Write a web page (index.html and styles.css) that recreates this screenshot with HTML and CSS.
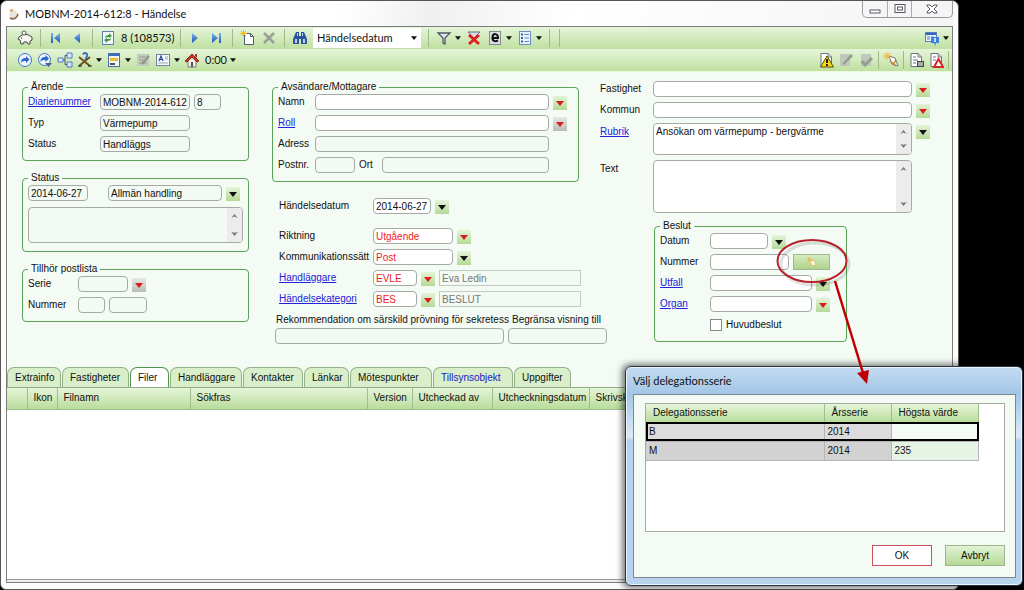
FILE: index.html
```html
<!DOCTYPE html>
<html lang="sv">
<head>
<meta charset="utf-8">
<title>MOBNM-2014-612:8 - Händelse</title>
<link rel="stylesheet" href="styles.css">
</head>
<body>
<svg class="defs" aria-hidden="true">
  <defs>
    <linearGradient id="blue" x1="0" y1="0" x2="0" y2="1"><stop offset="0" stop-color="#7db4ee"/><stop offset="1" stop-color="#1f57b8"/></linearGradient>
    <symbol id="down" viewBox="0 0 8 5"><path d="M0 0h8L4 5z" fill="currentColor"/></symbol>
    <symbol id="chev-up" viewBox="0 0 8 5"><path d="M0 5l4-5 4 5-4-2z" fill="#777"/></symbol>
    <symbol id="chev-down" viewBox="0 0 8 5"><path d="M0 0l4 5 4-5-4 1z" fill="#777"/></symbol>
    <symbol id="doc" viewBox="0 0 16 16"><path d="M3 1.5h7l3.500 3.500v9.500H3z" fill="#fff" stroke="#6c7480"/><path d="M10 1.500V5h3.500" fill="none" stroke="#6c7480"/></symbol>
  </defs>
</svg>
<div class="desktop">
  <main class="window">
    <header class="titlebar">
      <svg class="icon" viewBox="0 0 16 16"><path d="M3 7l6-3 4 4-3 5-6 1z" fill="#e9e4de"/><path d="M4 12c4 2 7 0 8-4" fill="none" stroke="#8a6450" stroke-width="1.500"/><path d="M4 5l3-1" stroke="#d79a5a" stroke-width="2"/></svg>
      <h1>MOBNM-2014-612:8 - Händelse</h1>
      <div class="caption-buttons">
        <button type="button" aria-label="Minimera"><svg viewBox="0 0 14 12"><rect x="2" y="7" width="10" height="3" fill="#fff" stroke="#545866"/></svg></button>
        <button type="button" aria-label="Maximera"><svg viewBox="0 0 14 12"><rect x="2" y="1.500" width="10" height="8" fill="#fff" stroke="#545866"/><rect x="4.500" y="4" width="5" height="3" fill="#fff" stroke="#545866"/></svg></button>
        <button type="button" class="close" aria-label="Stäng"><svg viewBox="0 0 14 12"><path d="M2 2h3l2 2 2-2h3v1L9 6l3 3v1H9L7 8l-2 2H2V9l3-3-3-3z" fill="#fff" stroke="#545866"/></svg></button>
      </div>
    </header>
    <div class="client">
      <div class="toolbar wide" role="toolbar" aria-label="Navigering">
        <button type="button" aria-label="Spargris"><svg class="icon" viewBox="0 0 16 16"><path d="M2 7l3-2c2-1 6-1 8 1l2 1v3l-2 1v3h-2l-1-2H7l-1 2H4l-1-4-2-1z" fill="#f4f8ec" stroke="#444"/><circle cx="7" cy="3" r="2" fill="#fff" stroke="#555"/><path d="M4 8h1" stroke="#222"/></svg></button>
        <span class="sep"></span>
        <button type="button" aria-label="Första"><svg class="icon" viewBox="0 0 16 16"><path d="M3 3h2v10H3zM12 3v10L6 8z" fill="url(#blue)"/></svg></button>
        <button type="button" aria-label="Föregående"><svg class="icon" viewBox="0 0 16 16"><path d="M11 3v10L5 8z" fill="url(#blue)"/></svg></button>
        <span class="sep"></span>
        <button type="button" aria-label="Uppdatera"><svg class="icon" viewBox="0 0 16 16"><rect x="2.500" y="1.500" width="11" height="13" fill="#f2f7fd" stroke="#5f7fae"/><path d="M5 8c0-3 3-3 4-3V3l3 3-3 2V7c-2 0-3 0-4 1zM11 8c0 3-3 3-4 3v2l-3-3 3-2v1c2 0 3 0 4-1z" fill="#3f9b3a"/></svg></button>
        <span class="count">8 (108573)</span>
        <span class="sep"></span>
        <button type="button" aria-label="Nästa"><svg class="icon" viewBox="0 0 16 16"><path d="M4 3v10l6-5z" fill="url(#blue)"/></svg></button>
        <button type="button" aria-label="Sista"><svg class="icon" viewBox="0 0 16 16"><path d="M3 3v10l6-5zM10 3h2v10h-2z" fill="url(#blue)"/></svg></button>
        <span class="sep"></span>
        <button type="button" aria-label="Ny"><svg class="icon" viewBox="0 0 16 16"><path d="M4.500 3.500h6l3 3v8h-9z" fill="#fff" stroke="#4e5b72"/><path d="M10.500 3.500v3h3" fill="none" stroke="#4e5b72"/><path d="M3.500 0v7M0 3.500h7M1 1l5 5M6 1L1 6" stroke="#f0b92c"/></svg></button>
        <button type="button" aria-label="Ta bort"><svg class="icon" viewBox="0 0 16 16"><path d="M3 3l10 10M13 3L3 13" stroke="#9b9f98" stroke-width="2.500"/></svg></button>
        <span class="sep"></span>
        <button type="button" aria-label="Sök"><svg class="icon" viewBox="0 0 16 16"><path d="M4 2h3v4h2V2h3l3 7v5H9V9H7v5H1V9z" fill="#2c549c"/><path d="M3 9h2v4H3zM11 9h2v4h-2zM5 3h1v3H5zM10 3h1v3h-1z" fill="#b6d0f4"/></svg></button>
        <label class="combo"><select aria-label="Sökfält"><option>Händelsedatum</option></select><svg class="caret"><use href="#down"/></svg></label>
        <span class="sep"></span>
        <button type="button" class="drop" aria-label="Filter"><svg class="icon" viewBox="0 0 16 16"><path d="M2 3h12l-5 5v6l-2-1V8z" fill="#dfe6ee" stroke="#4f5863" stroke-width="1.300"/></svg><svg class="caret"><use href="#down"/></svg></button>
        <button type="button" aria-label="Rensa filter"><svg class="icon" viewBox="0 0 16 16"><path d="M2 2h12l-5 5v4H7V7z" fill="#d5dce4" stroke="#68717c"/><path d="M3 5l10 9M13 5L3 14" stroke="#e0201c" stroke-width="3"/></svg></button>
        <button type="button" class="drop" aria-label="Export"><svg class="icon" viewBox="0 0 16 16"><rect x="2.500" y="1.500" width="11" height="13" fill="#dcdfe2" stroke="#858a90"/><path d="M5 8h6c0-5-5-5-5.500-1S8 12 11 10.500" fill="none" stroke="#111" stroke-width="2"/></svg><svg class="caret"><use href="#down"/></svg></button>
        <button type="button" class="drop" aria-label="Lista"><svg class="icon" viewBox="0 0 16 16"><rect x="2.500" y="1.500" width="11" height="13" fill="#e9f2fd" stroke="#6d8fc4"/><path d="M4 4.500h2M4 8h2M4 11.500h2" stroke="#2a62b8" stroke-width="2"/><path d="M7.500 4.500H12M7.500 8H12M7.500 11.500H12" stroke="#6689bd"/></svg><svg class="caret"><use href="#down"/></svg></button>
        <span class="sep"></span><span class="sep"></span>
        <span class="spring"></span>
        <button type="button" class="drop" aria-label="Information"><svg class="icon" viewBox="0 0 16 16"><rect x="1.500" y="2.500" width="11" height="9" fill="#eaf2fc" stroke="#5a7fbf"/><path d="M2 4h10" stroke="#3465ba" stroke-width="2"/><path d="M3 7h3M3 9h3M7 7h3" stroke="#5a7fbf"/><path d="M7 7h8v6h-3l-1 3-1-3H7z" fill="#3b7fe0"/><path d="M11 8v4" stroke="#fff" stroke-width="1.500"/></svg><svg class="caret"><use href="#down"/></svg></button>
      </div>
      <div class="toolbar" role="toolbar" aria-label="Åtgärder">
        <button type="button" aria-label="Gå till"><svg class="icon" viewBox="0 0 16 16"><circle cx="8" cy="8" r="6.500" fill="#eef5ff" stroke="#3d75cf"/><path d="M4 11c0-4 2-5 5-5V4l3.500 3.500L9 11V9C7 9 5 9 4 11z" fill="#2e67c6"/></svg></button>
        <button type="button" aria-label="Gå vidare"><svg class="icon" viewBox="0 0 16 16"><circle cx="7.500" cy="7.500" r="6" fill="#eef5ff" stroke="#3d75cf"/><path d="M3.500 10c0-4 2-5 5-5V3L12 6.500 8.500 10V8C6 8 5 8 3.500 10z" fill="#2e67c6"/><path d="M8 11h7l-3.500 4z" fill="#46619a"/></svg></button>
        <button type="button" aria-label="Struktur"><svg class="icon" viewBox="0 0 16 16"><path d="M5 8h3M8 3.500v9M8 3.500h2M8 12.500h2" fill="none" stroke="#456"/><path d="M1 6h5v4H1zM10 1h5v5h-5zM10 10h5v5h-5z" fill="#dce9fb" stroke="#4a78c4"/></svg></button>
        <button type="button" class="drop" aria-label="Koppla"><svg class="icon" viewBox="0 0 16 16"><path d="M6 2.500C7 0 11 1 10 4L8 9" fill="none" stroke="#3c6cc0" stroke-width="2"/><path d="M2 5l11 9M13 5L2 14" stroke="#6d5524" stroke-width="2"/><path d="M1 14h4M11 14h4" stroke="#222"/></svg><svg class="caret"><use href="#down"/></svg></button>
        <button type="button" class="drop" aria-label="Formulär"><svg class="icon" viewBox="0 0 16 16"><rect x="2.500" y="1.500" width="11" height="13" fill="#eef4fc" stroke="#4c6fa8"/><path d="M3 3h10" stroke="#3e6cb8" stroke-width="2"/><path d="M4 6h8v3H4z" fill="#f0ba32"/><path d="M4 12h5" stroke="#555" stroke-width="2"/></svg><svg class="caret"><use href="#down"/></svg></button>
        <button type="button" aria-label="Redigera" disabled><svg class="icon" viewBox="0 0 16 16"><path d="M2 2h12v12H2z" fill="#c3cbbe"/><path d="M4 5h7M4 8h5M4 11h8" stroke="#959d91"/><path d="M7 12l7-8" stroke="#8b9287" stroke-width="2"/></svg></button>
        <button type="button" class="drop" aria-label="Text"><svg class="icon" viewBox="0 0 16 16"><rect x="1.500" y="2.500" width="13" height="11" fill="#f5f8fc" stroke="#7084a4"/><path d="M4 9l2-5 2 5M5 7.500h2" fill="none" stroke="#244a94" stroke-width="1.200"/><path d="M10 5h3M10 7h3M3 11h10" stroke="#9ab"/></svg><svg class="caret"><use href="#down"/></svg></button>
        <button type="button" class="drop" aria-label="Tid"><svg class="icon" viewBox="0 0 16 16"><path d="M4 8v7h8V8" fill="#f3eee6" stroke="#777"/><path d="M1 9l7-7 7 7-2 1-5-5-5 5z" fill="#c63c2c" stroke="#8f251c"/><path d="M11 2h2v4l-2-2z" fill="#9c3428"/><path d="M7 10h2v5H7z" fill="#555"/></svg><span class="time">0:00</span><svg class="caret"><use href="#down"/></svg></button>
        <span class="spring"></span>
        <button type="button" aria-label="Varning"><svg class="icon" viewBox="0 0 16 16"><use href="#doc"/><path d="M9 4l6.500 11h-13z" fill="#f6d71d" stroke="#594d00"/><path d="M9 7v4M9 12v2" stroke="#222" stroke-width="2"/></svg></button>
        <button type="button" aria-label="Redigera dokument" disabled><svg class="icon" viewBox="0 0 16 16"><path d="M2 2h10v12H2z" fill="#c0c8bc"/><path d="M5 11l8-9 2 2-8 8-3 1z" fill="#959c92"/></svg></button>
        <button type="button" aria-label="Checka in" disabled><svg class="icon" viewBox="0 0 16 16"><path d="M3 2h10v12H3z" fill="#c0c8bc"/><path d="M4 9l3 4 7-7" fill="none" stroke="#969e93" stroke-width="3"/></svg></button>
        <span class="sep"></span>
        <button type="button" aria-label="Ny handling"><svg class="icon" viewBox="0 0 16 16"><path d="M6 4l6 2 3 8-6-2z" fill="#fff" stroke="#777"/><path d="M4 0v8M0 4h8M1 1l6 6M7 1L1 7" stroke="#f0b92c"/><path d="M7 9l6 5M13 8l-3 5" stroke="#c0853c" stroke-width="1.500"/></svg></button>
        <span class="sep"></span>
        <button type="button" aria-label="Dokument"><svg class="icon" viewBox="0 0 16 16"><use href="#doc"/><path d="M5 5h3M5 8h5M5 11h3" stroke="#6a788a"/><rect x="9.500" y="9.500" width="6" height="5" fill="#aaa" stroke="#444"/></svg></button>
        <button type="button" aria-label="Dokumentvarning"><svg class="icon" viewBox="0 0 16 16"><use href="#doc"/><path d="M5 5h3M5 8h3" stroke="#6a788a"/><path d="M10.500 7l4.500 8H6z" fill="#fff" stroke="#d9262a" stroke-width="2"/></svg></button>
        <span class="sep"></span>
      </div>

      <form class="form">
        <div class="col left">
          <fieldset class="label-72">
            <legend>Ärende</legend>
            <div class="row"><a href="#" id="l-diar">Diarienummer</a><div class="controls"><input class="w-88" aria-labelledby="l-diar" value="MOBNM-2014-612" readonly><input class="w-26" aria-label="Löpnummer" value="8" readonly></div></div>
            <div class="row"><label for="typ">Typ</label><div class="controls"><input id="typ" class="w-88" value="Värmepump" readonly></div></div>
            <div class="row"><label for="st">Status</label><div class="controls"><input id="st" class="w-88" value="Handläggs" readonly></div></div>
          </fieldset>
          <fieldset class="status">
            <legend>Status</legend>
            <div class="controls spread"><input class="w-60" aria-label="Statusdatum" value="2014-06-27" readonly><div class="controls"><input class="w-114" aria-label="Handlingsstatus" value="Allmän handling" readonly><button type="button" class="pick" aria-label="Välj status"><svg><use href="#down"/></svg></button></div></div>
            <div class="memo short readonly"><textarea aria-label="Statustext" readonly></textarea><span class="scroll"><svg><use href="#chev-up"/></svg><svg><use href="#chev-down"/></svg></span></div>
          </fieldset>
          <fieldset class="label-50">
            <legend>Tillhör postlista</legend>
            <div class="row"><label for="serie">Serie</label><div class="controls"><input id="serie" class="w-50" readonly><button type="button" class="pick red gray" aria-label="Välj serie"><svg><use href="#down"/></svg></button></div></div>
            <div class="row"><label for="pnr">Nummer</label><div class="controls"><input id="pnr" class="w-26" readonly><input class="w-38" aria-label="Postnummer i lista" readonly></div></div>
          </fieldset>
        </div>

        <div class="col middle">
          <fieldset class="label-36 party">
            <legend>Avsändare/Mottagare</legend>
            <div class="row"><label for="namn">Namn</label><div class="controls"><input id="namn" class="grow"><button type="button" class="pick red" aria-label="Välj namn"><svg><use href="#down"/></svg></button></div></div>
            <div class="row"><a href="#" id="l-roll">Roll</a><div class="controls"><input class="grow" aria-labelledby="l-roll"><button type="button" class="pick red gray" aria-label="Välj roll"><svg><use href="#down"/></svg></button></div></div>
            <div class="row"><label for="adr">Adress</label><div class="controls no-pick"><input id="adr" class="grow" readonly></div></div>
            <div class="row"><label for="pn">Postnr.</label><div class="controls no-pick"><input id="pn" class="w-40" readonly><label for="ort" class="ort">Ort</label><input id="ort" class="grow" readonly></div></div>
          </fieldset>
          <div class="details label-94">
            <div class="row first"><label for="hd">Händelsedatum</label><div class="controls"><input id="hd" class="w-58" value="2014-06-27"><button type="button" class="pick" aria-label="Välj datum"><svg><use href="#down"/></svg></button></div></div>
            <div class="row"><label for="rikt">Riktning</label><div class="controls"><input id="rikt" class="w-80 must" value="Utgående"><button type="button" class="pick red" aria-label="Välj riktning"><svg><use href="#down"/></svg></button></div></div>
            <div class="row"><label for="kom">Kommunikationssätt</label><div class="controls"><input id="kom" class="w-80 must" value="Post"><button type="button" class="pick" aria-label="Välj kommunikationssätt"><svg><use href="#down"/></svg></button></div></div>
            <div class="row"><a href="#" id="l-hl">Handläggare</a><div class="controls"><input class="w-44 must" aria-labelledby="l-hl" value="EVLE"><button type="button" class="pick red" aria-label="Välj handläggare"><svg><use href="#down"/></svg></button><input class="w-142 echo" aria-label="Handläggarens namn" value="Eva Ledin" readonly></div></div>
            <div class="row"><a href="#" id="l-hk">Händelsekategori</a><div class="controls"><input class="w-44 must" aria-labelledby="l-hk" value="BES"><button type="button" class="pick red" aria-label="Välj kategori"><svg><use href="#down"/></svg></button><input class="w-142 echo" aria-label="Kategorinamn" value="BESLUT" readonly></div></div>
          </div>
          <div class="secrecy">
            <label for="rek">Rekommendation om särskild prövning för sekretess</label>
            <label for="beg">Begränsa visning till</label>
            <input id="rek" readonly>
            <input id="beg" readonly>
          </div>
        </div>

        <div class="col right label-53">
          <div class="row"><label for="fast">Fastighet</label><div class="controls"><input id="fast" class="grow"><button type="button" class="pick red" aria-label="Välj fastighet"><svg><use href="#down"/></svg></button></div></div>
          <div class="row"><label for="komm">Kommun</label><div class="controls"><input id="komm" class="grow"><button type="button" class="pick red" aria-label="Välj kommun"><svg><use href="#down"/></svg></button></div></div>
          <div class="row tall"><a href="#" id="l-rub">Rubrik</a><div class="controls"><div class="memo small grow"><textarea aria-labelledby="l-rub">Ansökan om värmepump - bergvärme</textarea><span class="scroll"><svg><use href="#chev-up"/></svg><svg><use href="#chev-down"/></svg></span></div><button type="button" class="pick" aria-label="Välj rubrik"><svg><use href="#down"/></svg></button></div></div>
          <div class="row tall"><label for="txt">Text</label><div class="controls no-pick"><div class="memo large grow"><textarea id="txt"></textarea><span class="scroll"><svg><use href="#chev-up"/></svg><svg><use href="#chev-down"/></svg></span></div></div></div>
          <fieldset class="decision label-50">
            <legend>Beslut</legend>
            <div class="row"><label for="dat">Datum</label><div class="controls"><input id="dat" class="w-58"><button type="button" class="pick" aria-label="Välj beslutsdatum"><svg><use href="#down"/></svg></button></div></div>
            <div class="row"><label for="num">Nummer</label><div class="controls"><input id="num" class="w-78"><button type="button" class="generate" aria-label="Hämta nummer"><svg viewBox="0 0 12 12"><path d="M4 4l5 1 1 5-5-1z" fill="#f3f6dc" stroke="#dcc069"/><path d="M3 1v5M1 3h5" stroke="#efae38"/></svg></button></div></div>
            <div class="row"><a href="#" id="l-utf">Utfall</a><div class="controls"><input class="w-102" aria-labelledby="l-utf"><button type="button" class="pick" aria-label="Välj utfall"><svg><use href="#down"/></svg></button></div></div>
            <div class="row"><a href="#" id="l-org">Organ</a><div class="controls"><input class="w-102" aria-labelledby="l-org"><button type="button" class="pick red" aria-label="Välj organ"><svg><use href="#down"/></svg></button></div></div>
            <div class="row check"><span></span><label><input type="checkbox">Huvudbeslut</label></div>
          </fieldset>
        </div>
      </form>

      <div class="tabs" role="tablist">
        <button type="button" role="tab">Extrainfo</button>
        <button type="button" role="tab">Fastigheter</button>
        <button type="button" role="tab" aria-selected="true">Filer</button>
        <button type="button" role="tab">Handläggare</button>
        <button type="button" role="tab">Kontakter</button>
        <button type="button" role="tab">Länkar</button>
        <button type="button" role="tab">Mötespunkter</button>
        <button type="button" role="tab" class="marked">Tillsynsobjekt</button>
        <button type="button" role="tab">Uppgifter</button>
      </div>
      <div class="files">
        <table>
          <colgroup><col class="c-20"><col class="c-30"><col class="c-133"><col class="c-177"><col class="c-45"><col class="c-80"><col class="c-97"><col></colgroup>
          <thead><tr><th></th><th>Ikon</th><th>Filnamn</th><th>Sökfras</th><th>Version</th><th>Utcheckad av</th><th>Utcheckningsdatum</th><th>Skrivskyddad</th></tr></thead>
        </table>
      </div>
      <div class="statusbar"></div>
    </div>
  </main>

  <section class="dialog" role="dialog" aria-labelledby="dlg-title">
    <h2 id="dlg-title">Välj delegationsserie</h2>
    <div class="dialog-body">
      <div class="series">
        <table>
          <thead><tr><th class="name">Delegationsserie</th><th class="year">Årsserie</th><th>Högsta värde</th></tr></thead>
          <tbody>
            <tr class="selected"><td>B</td><td>2014</td><td></td></tr>
            <tr><td>M</td><td>2014</td><td>235</td></tr>
          </tbody>
        </table>
      </div>
      <div class="actions"><button type="button" class="ok">OK</button><button type="button">Avbryt</button></div>
    </div>
  </section>

  <svg class="callout" viewBox="0 0 110 160" aria-hidden="true">
    <ellipse cx="45" cy="34" rx="34" ry="21" fill="none" stroke="#000" stroke-opacity=".12" stroke-width="3"/>
    <ellipse cx="42" cy="31" rx="34.500" ry="21" fill="none" stroke="#b8202a" stroke-width="2"/>
    <path d="M65 51l28 92" stroke="#c00000" stroke-width="2.500"/>
    <path d="M87 143l12-3-2 14z" fill="#c00000"/>
  </svg>
</div>
</body>
</html>
```
FILE: styles.css
```css
* { box-sizing: border-box; }

body {
  margin: 0;
  background: #000;
  color: #111;
  font: 10px/12px "Liberation Sans", sans-serif;
}

button, input, select, textarea { font: inherit; color: inherit; margin: 0; }
button { border: 0; padding: 0; background: none; }
a { color: #2222d8; }
.defs { position: absolute; width: 0; height: 0; }

.desktop { position: relative; min-height: 100vh; display: flex; }

.window {
  flex: 1;
  min-width: 0;
  margin-right: 65px;
  display: flex;
  flex-direction: column;
  padding: 0 5px 6px;
  border: 1px solid #555;
  border-radius: 7px 7px 6px 6px;
  background: #fcfcfc;
}

.titlebar {
  height: 25px;
  display: flex;
  align-items: center;
  gap: 3px;
  background: linear-gradient(100deg, #fff 35%, #f0f0f0 45%, #fff 60%, #f4f4f4);
}
.titlebar h1 { flex: 1; margin: 0; font: 11px/16px "Lato", sans-serif; color: #111; }
.icon { width: 16px; height: 16px; display: block; }
.caption-buttons {
  align-self: flex-start;
  display: flex;
  border: 1px solid #999ba0;
  border-top: 0;
  border-radius: 0 0 5px 5px;
}
.caption-buttons button { width: 24px; height: 16px; display: grid; place-items: center; }
.caption-buttons button + button { border-left: 1px solid #aaacb0; }
.caption-buttons .close { width: 41px; }
.caption-buttons svg { width: 14px; height: 12px; }

.client {
  flex: 1;
  display: flex;
  flex-direction: column;
  border: 1px solid #7b7f7b;
  background: #f3fbf4;
}

.toolbar {
  display: flex;
  align-items: center;
  gap: 4px;
  height: 22px;
  padding: 0 3px 0 10px;
  background: linear-gradient(#e6f5da, #bfe0a0);
  font: 11px/14px "Lato", sans-serif;
}
.toolbar.wide { gap: 5px; }
.toolbar .sep { width: 1px; height: 18px; background: #9fb98c; }
.toolbar.wide .sep { margin: 0 2px; }
.toolbar .spring { flex: 1; }
.toolbar .drop { display: flex; align-items: center; gap: 3px; }
.toolbar .count { width: 52px; text-align: center; white-space: nowrap; }
.toolbar .time { padding-left: 2px; }
.caret { width: 6px; height: 4px; color: #111; }
.combo {
  display: flex;
  align-items: center;
  width: 108px;
  height: 20px;
  padding: 0 4px;
  background: #fff;
}
.combo select { flex: 1; min-width: 0; appearance: none; border: 0; padding: 0; background: none; }

.form {
  display: grid;
  grid-template-columns: 227px 305px 1fr;
  column-gap: 23px;
  padding: 9px 22px 0 15px;
  border-top: 1px solid #e9fbdc;
}
.col { display: flex; flex-direction: column; min-width: 0; }
.left { gap: 11px; }
.right { gap: 5px; }

fieldset {
  min-width: 0;
  margin: 0;
  padding: 1px 5px 8px;
  border: 1px solid #5ba25b;
  border-radius: 4px;
}
legend { padding: 0 3px; }
.row {
  display: grid;
  grid-template-columns: var(--label) 1fr;
  align-items: center;
  min-height: 16px;
}
.row.tall, .row.tall .controls { align-items: start; }
.row.tall > :first-child { padding-top: 3px; }
fieldset .row + .row, .details .row + .row { margin-top: 5px; }
.label-36 { --label: 37px; }
.label-50 { --label: 50px; }
.label-53 { --label: 53px; }
.label-72 { --label: 72px; }
.label-94 { --label: 94px; }

.controls { display: flex; align-items: center; gap: 4px; min-width: 0; }
.controls.spread { justify-content: space-between; padding-right: 3px; }
.controls.no-pick { padding-right: 18px; }
.form input:not([type]), .memo {
  height: 16px;
  min-width: 0;
  padding: 0 2px;
  border: 1px solid #a5aaa5;
  border-radius: 4px;
  background: #fff;
}
.form input[readonly], .memo.readonly { background: #f3faf3; }
.form input.must { color: #ee1c24; }
.form input.echo { border-radius: 0; border-color: #c3c9c3; color: #777; }
.grow { flex: 1; }
.w-26 { width: 27px; }
.w-38 { width: 38px; }
.w-40 { width: 40px; }
.w-44 { width: 44px; }
.w-50 { width: 50px; }
.w-58 { width: 58px; }
.w-60 { width: 60px; }
.w-78 { width: 79px; }
.w-80 { width: 80px; }
.w-88 { width: 90px; }
.w-102 { width: 102px; }
.w-114 { width: 114px; }
.w-142 { width: 142px; }
.details input, .details .pick { flex-shrink: 0; }
.ort { width: 19px; }

.pick {
  width: 14px;
  height: 14px;
  margin-top: 2px;
  display: grid;
  place-items: center;
  background: linear-gradient(#e4f4d8, #b5d996);
  color: #111;
}
.pick svg { width: 8px; height: 5px; }
.pick.red { color: #d81e1e; }
.pick.gray { background: linear-gradient(#e6e8e4, #b9bdb7); }
.generate {
  width: 37px;
  height: 16px;
  border: 1px solid #9fb98c;
  background: linear-gradient(#d5ecc0, #aed38c);
}
.generate svg { width: 12px; height: 12px; display: block; margin: 0 auto; }

.memo { display: flex; padding: 0; overflow: hidden; }
.form .memo { padding: 0; }
.memo textarea { flex: 1; min-width: 0; padding: 2px; border: 0; resize: none; background: none; overflow: hidden; outline: 0; }
.memo.short { height: 36px; margin-top: 6px; }
.memo.small { height: 32px; }
.memo.large { height: 53px; }
.scroll {
  width: 15px;
  display: flex;
  flex-direction: column;
  align-items: center;
  justify-content: space-between;
  padding: 6px 0;
  background: #ececec;
}
.scroll svg { width: 7px; height: 4px; }

.party { width: 307px; padding-right: 11px; }
.details { padding: 16px 0 0 7px; }
.details .row.first { margin-bottom: 14px; }
.secrecy {
  display: grid;
  grid-template-columns: 229px 99px;
  column-gap: 4px;
  row-gap: 2px;
  margin: 7px 0 0 3px;
}
.secrecy label { padding-left: 1px; white-space: nowrap; }
.secrecy label + label { padding-left: 4px; }
.decision { width: 193px; margin: 2px 0 0 54px; }
.decision .check { margin-top: 7px; }
.check label { display: flex; align-items: center; gap: 4px; }
.check input { appearance: none; width: 12px; height: 12px; border: 1px solid #888; background: #fff; }

.tabs {
  display: flex;
  gap: 1px;
  margin-top: auto;
  border-bottom: 1px solid #8fae85;
}
.tabs button {
  height: 20px;
  padding: 0 7px;
  text-align: left;
  border: 1px solid #93b089;
  border-bottom: 0;
  border-radius: 7px 7px 0 0;
  background: #d9efc9;
}
.tabs button:nth-child(1) { width: 54px; }
.tabs button:nth-child(2) { width: 67px; }
.tabs button:nth-child(3) { width: 39px; }
.tabs button:nth-child(4) { width: 72px; }
.tabs button:nth-child(5) { width: 60px; }
.tabs button:nth-child(6) { width: 45px; }
.tabs button:nth-child(7) { width: 82px; }
.tabs button:nth-child(8) { width: 80px; }
.tabs button:nth-child(9) { width: 57px; }
.tabs button[aria-selected] { background: #fff; border-color: #4e944e; }
.tabs .marked { color: #1818cc; }

.files { height: 191px; background: #fff; }
table { border-collapse: collapse; table-layout: fixed; }
.files table { width: 100%; }
th {
  padding: 0 6px;
  text-align: left;
  font-weight: normal;
  white-space: nowrap;
  background: linear-gradient(#e6f5da, #b8dc9a);
}
.files th { height: 21px; border-right: 1px solid #9fbd8e; border-bottom: 1px solid #9fbd8e; }
.c-20 { width: 20px; }
.c-30 { width: 30px; }
.c-45 { width: 45px; }
.c-80 { width: 80px; }
.c-97 { width: 97px; }
.c-133 { width: 133px; }
.c-177 { width: 177px; }
.statusbar { height: 3px; border-top: 1px solid #999; background: #eee; }

.dialog {
  position: absolute;
  right: 1px;
  bottom: 4px;
  width: 398px;
  padding: 0 6px 7px 7px;
  border: 1px solid #2b3440;
  border-radius: 6px;
  background: linear-gradient(#c4dcf2 0, #a3c6e6 27px, #dcebf9 70px, #b4d2ef 73px, #b9d3ed);
  box-shadow: inset 0 0 0 1px #e9f4fd, -1px 0 6px 2px #0008;
}
.dialog h2 { margin: 0; font: 11px/27px "Lato", sans-serif; color: #111; }
.dialog-body { padding: 8px 10px 11px 11px; border: 1px solid #7d8791; background: #f3fbf4; }
.series { height: 129px; border: 1px solid #a5aaa5; background: #fff; }
.series table { width: 333px; }
.series th { height: 18px; padding: 0 7px; border-right: 1px solid #9fbd8e; }
.series td { height: 19px; padding: 0 3px; border: 1px solid #b5b5b5; border-left: 0; background: #d2d2d2; }
.series td:last-child { background: #e6f4e6; }
.series .name { width: 178px; }
.series .year { width: 67px; }
.series .selected { outline: 2px solid #000; outline-offset: -2px; }
.series .selected td { background: #dcdcdc; }
.series .selected td:last-child { background: #f4fbf4; }
.actions { display: flex; justify-content: flex-end; gap: 13px; margin-top: 13px; }
.actions button {
  width: 60px;
  height: 21px;
  border: 1px solid #9fb58e;
  background: linear-gradient(#e2f3d5, #b5d996);
}
.actions .ok { border-color: #d0505a; background: #fff; }

.callout { position: absolute; left: 770px; top: 230px; width: 110px; height: 160px; pointer-events: none; }
```
